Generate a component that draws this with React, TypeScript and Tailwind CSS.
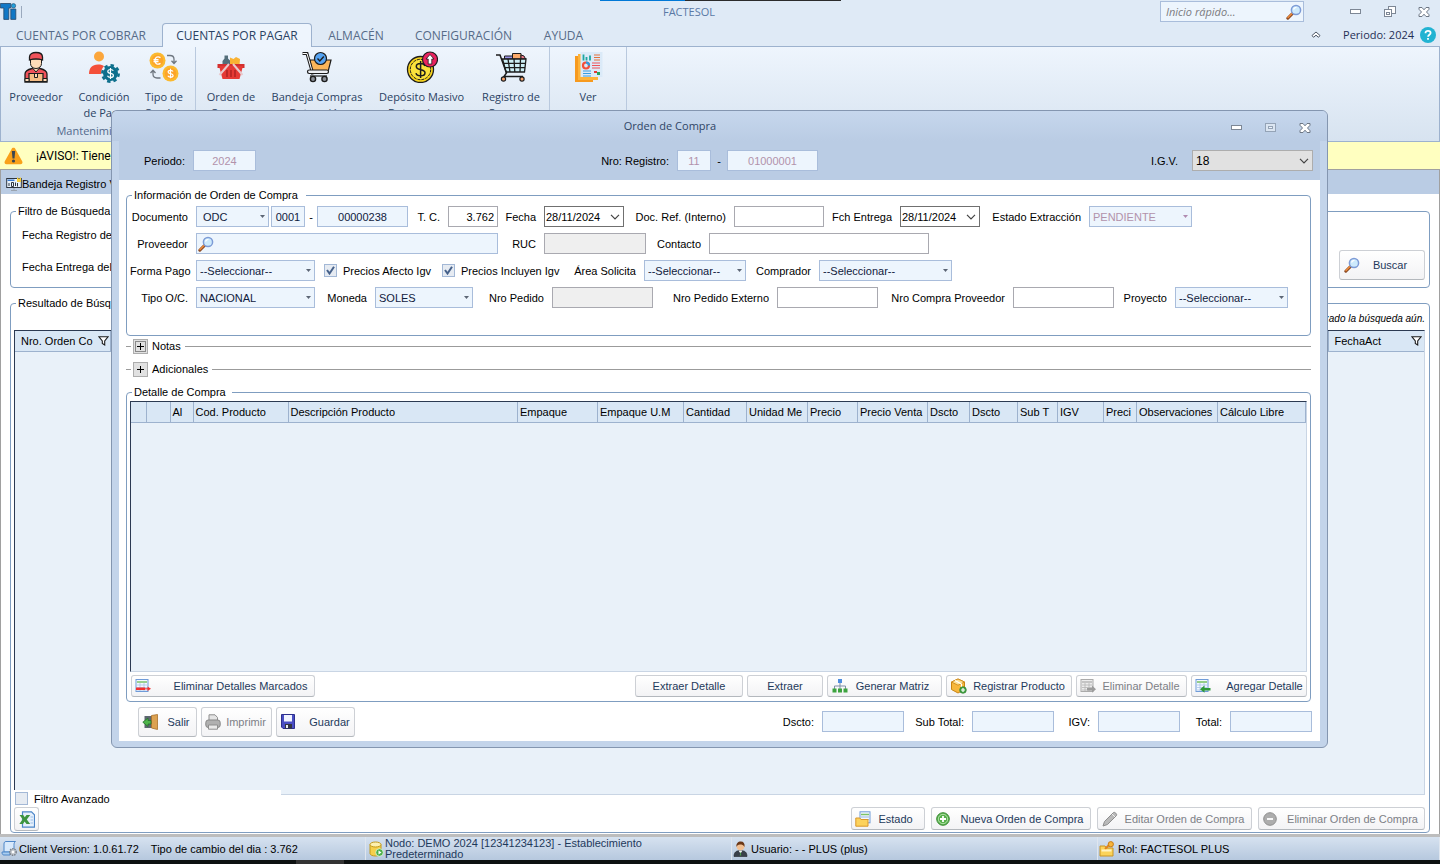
import React, { ReactNode } from "react";

/* ---------- drawings ---------- */

const Svg = ({ w, h, vb, children, className = "" }: { w: number; h: number; vb: string; children: ReactNode; className?: string }) => (
  <svg width={w} height={h} viewBox={vb} className={"shrink-0 " + className} fill="none" aria-hidden="true">
    {children}
  </svg>
);

const Logo = () => (
  <Svg w={17} h={17} vb="0 0 17 17">
    <path d="M.4.500h10.400v4.500H8.800v11.400H3.800V5H.4z" fill="#1178c6" stroke="#27476a" strokeWidth=".8" />
    <path d="M10.800 6h5v10.400h-5z" fill="#1178c6" stroke="#27476a" strokeWidth=".8" />
    <circle cx="13.500" cy="2.800" r="2.200" fill="#22a0dc" stroke="#27476a" strokeWidth=".6" />
  </Svg>
);

const Magnifier = () => (
  <Svg w={16} h={16} vb="0 0 16 16">
    <path d="M6.500 9.500 1.800 14.200" stroke="#8a4a24" strokeWidth="3" strokeLinecap="round" />
    <path d="M6 9.500 2 13.500" stroke="#f08c3c" strokeWidth="1.500" strokeLinecap="round" />
    <circle cx="10" cy="6" r="4.600" fill="#cdeafc" stroke="#7d9bd6" strokeWidth="1.500" />
    <path d="M7.500 5.500a3 3 0 0 1 3-2.200" stroke="#fff" strokeWidth="1.300" />
  </Svg>
);

const IcoProveedor = () => (
  <Svg w={32} h={32} vb="0 0 32 32">
    <path d="M5 31V23c0-3 3-4.500 7-5.500h8c4 1 7 2.500 7 5.500v8z" fill="#f0525a" stroke="#1c1c1c" strokeWidth="1.300" />
    <path d="m12.500 17 3.500 4 3.500-4v-3h-7z" fill="#ffdcb8" stroke="#1c1c1c" />
    <path d="M10.500 8h11v4.500c0 3-2.500 5-5.500 5s-5.500-2-5.500-5z" fill="#ffdcb8" stroke="#1c1c1c" />
    <path d="M9.500 9V6c0-3 3-4.500 6.500-4.500S22.500 3 22.500 6v3c-4-1.500-9-1.500-13 0z" fill="#f0525a" stroke="#1c1c1c" strokeWidth="1.300" />
    <path d="M9 30.500v-8h14v8z" fill="#f5bd85" stroke="#1c1c1c" strokeWidth="1.200" />
    <path d="M14.500 23v3.500h3V23M5 27.500h4v3H5zM23 27.500h4v3h-4z" fill="#ffdcb8" stroke="#1c1c1c" />
  </Svg>
);

const IcoCondicion = () => (
  <Svg w={32} h={32} vb="0 0 32 32">
    <circle cx="11" cy="5.500" r="5" fill="#fba63c" />
    <path d="M1 23c0-6 3-9.500 9-9.500 3 0 5 .6 6 1.800-2 2-3 4.500-3 7.700z" fill="#f4503a" />
    <circle cx="22.500" cy="22.500" r="8.200" stroke="#0d6f8c" strokeWidth="2.500" strokeDasharray="3.400 3" />
    <circle cx="22.500" cy="22.500" r="7.500" fill="#0d6f8c" />
    <path d="M25.300 19.800c-.5-1-1.500-1.300-2.800-1.300-1.700 0-2.700.8-2.700 1.900 0 2.900 5.600 1.200 5.600 4 0 1.200-1.200 2-2.900 2-1.500 0-2.600-.5-3-1.600M22.500 17v11" stroke="#fff" strokeWidth="1.200" />
  </Svg>
);

const IcoCambio = () => (
  <Svg w={32} h={32} vb="0 0 32 32">
    <circle cx="9.500" cy="9.500" r="8" fill="#fbb92e" />
    <circle cx="9.500" cy="9.500" r="5.700" fill="#fda429" />
    <path d="M12.500 6.600c-3.500-2-5.500.2-5.500 2.900s2 4.900 5.500 2.900M5.500 8.700h5M5.500 10.500h5" stroke="#fff" strokeWidth="1.300" />
    <circle cx="22.500" cy="22.500" r="8" fill="#fbb92e" />
    <circle cx="22.500" cy="22.500" r="5.700" fill="#fda429" />
    <path d="M25 20.500c-.4-.9-1.300-1.200-2.500-1.200-1.500 0-2.400.6-2.400 1.600 0 2.500 5 1 5 3.500 0 1-1 1.700-2.600 1.700-1.300 0-2.300-.5-2.600-1.400M22.500 17.800v9.500" stroke="#fff" strokeWidth="1.200" />
    <path d="M19 4.500h3c2.500 0 4 1.200 4 3.700v4M23.500 9.800l2.500 2.700 2.500-2.700M12.500 27H9c-2.500 0-4-1.200-4-3.700v-4M2.500 22 5 19.200 7.500 22" stroke="#6f7780" strokeWidth="1.300" />
  </Svg>
);

const IcoCanasta = () => (
  <Svg w={32} h={32} vb="0 0 32 32">
    <path d="M9.500 4.500h3.500v3l2.500 2.500v5h-8v-5l2-2.500z" fill="#546e7a" />
    <path d="m15 6.500 3.500 1.500L21 6l4 2-.5 7H15z" fill="#f9b233" />
    <path d="M2.500 13h27v4h-27z" fill="#d32f2f" />
    <path d="M4 15h24l-3.500 13h-17z" fill="#e53935" />
    <path d="M12 19v7M16 19v7M20 19v7" stroke="#a81f1f" strokeWidth="1.300" />
    <path d="M14 13 4.500 24M18 13l9.500 11" stroke="#e8c8cc" strokeWidth="2" />
  </Svg>
);

const IcoBandeja = () => (
  <Svg w={32} h={32} vb="0 0 32 32">
    <path d="M9 9h21l-3 12H11z" fill="#fbb65a" stroke="#1c1c1c" strokeWidth="1.200" />
    <path d="M1.500 2.500H6l6 21" stroke="#1c1c1c" strokeWidth="3" />
    <path d="M1.500 2.500H6l6 21" stroke="#fff" strokeWidth="1" />
    <rect x="6.500" y="19" width="21" height="3.500" rx="1.700" fill="#eef0f5" stroke="#1c1c1c" strokeWidth="1.200" />
    <path d="M9 25h17" stroke="#1c1c1c" strokeWidth="1.200" />
    <circle cx="12" cy="28" r="2.600" fill="#8b8f98" stroke="#1c1c1c" strokeWidth="1.400" />
    <circle cx="23.500" cy="28" r="2.600" fill="#8b8f98" stroke="#1c1c1c" strokeWidth="1.400" />
    <circle cx="19.500" cy="7.500" r="6" fill="#55a3f2" stroke="#1c1c1c" strokeWidth="1.200" />
    <path d="m16.500 7.500 2.300 2.400 4-4.400" stroke="#1c1c1c" strokeWidth="1.400" />
  </Svg>
);

const IcoDeposito = () => (
  <Svg w={32} h={32} vb="0 0 32 32">
    <circle cx="14.500" cy="18.500" r="13" fill="#f8d41c" stroke="#1c1c1c" strokeWidth="1.300" />
    <circle cx="14.500" cy="18.500" r="10.200" fill="#fbe23c" stroke="#1c1c1c" strokeWidth="1" strokeDasharray="3 1" />
    <path d="M19 15c-.6-1.600-2.200-2.400-4.400-2.400-2.600 0-4.300 1.100-4.300 3 0 4.400 8.700 1.900 8.700 6.100 0 1.900-1.800 3.100-4.400 3.100-2.400 0-4.200-.9-4.600-2.700M14.600 10v17" stroke="#1c1c1c" strokeWidth="1.500" />
    <circle cx="24" cy="8.500" r="7.500" fill="#e9235f" stroke="#1c1c1c" strokeWidth="1.200" />
    <path d="m24 3.500 4 4.500h-2.200v5h-3.600V8H20z" fill="#fff" stroke="#1c1c1c" strokeWidth=".8" />
  </Svg>
);

const IcoRegistro = () => (
  <Svg w={32} h={32} vb="0 0 32 32">
    <path d="M9.500 8V5h8v3z" fill="#9a93e6" stroke="#1c1c1c" />
    <path d="M17.500 8V2.500H26V8z" fill="#fbaa6b" stroke="#1c1c1c" />
    <path d="M26 8V4l3 1 1.500 3z" fill="#f27a8c" stroke="#1c1c1c" />
    <path d="M7.500 8H31l-1.500 13H11z" fill="#cdeff5" stroke="#1c1c1c" strokeWidth="1.300" />
    <path d="M8.500 12.300H30.500M9.800 16.600H30M13 8l2 13M19 8l.8 13M25.500 8 25 21" stroke="#1c1c1c" strokeWidth="1.300" />
    <path d="M1 4h4l6.500 18-2.500 3.500h19" stroke="#1c1c1c" strokeWidth="1.500" />
    <circle cx="8.500" cy="28" r="2.100" fill="#fba36b" stroke="#1c1c1c" strokeWidth="1.200" />
    <circle cx="27" cy="28" r="2.100" fill="#fba36b" stroke="#1c1c1c" strokeWidth="1.200" />
  </Svg>
);

const IcoVer = () => (
  <Svg w={32} h={32} vb="0 0 32 32">
    <path d="M3 5h18v26H3z" fill="#f79a1e" />
    <path d="M6 3h20v26H6z" fill="#fdb33a" />
    <path d="M8.500 1h22v25h-22z" fill="#dbeaf8" />
    <path d="M11.500 3.500v6M14.500 6v3.500M18 4.500v5" stroke="#20a7a0" strokeWidth="1.800" />
    <path d="M22 4h6M22 6.500h6M22 9h6" stroke="#e5713a" strokeWidth="1.200" />
    <circle cx="14" cy="14.500" r="3" stroke="#f4503a" strokeWidth="2.200" />
    <path d="M14 11.500a3 3 0 0 1 3 3" stroke="#2d9ce0" strokeWidth="2.200" />
    <path d="M20 12h8M20 14.500h8M20 17h8" stroke="#f0525a" strokeWidth="1.200" />
    <path d="M11 20h8M11 22.500h8M11 25h8" stroke="#3a9de0" strokeWidth="1.200" />
    <path d="M22 20h3v2h-3z" fill="#e53935" />
    <path d="M25 21h3v3h-3z" fill="#28a35a" />
  </Svg>
);

const WinMin = () => (
  <Svg w={12} h={12} vb="0 0 12 12">
    <rect x=".5" y="3.500" width="10" height="4" fill="#fff" stroke="#7d8795" />
  </Svg>
);
const WinRestore = () => (
  <Svg w={12} h={12} vb="0 0 12 12">
    <rect x="4.500" y=".5" width="7" height="7" fill="#fff" stroke="#7d8795" />
    <rect x=".5" y="3.500" width="7" height="7" fill="#fff" stroke="#7d8795" />
    <rect x="2.500" y="6.500" width="3" height="2" stroke="#7d8795" />
  </Svg>
);
const WinMax = () => (
  <Svg w={12} h={12} vb="0 0 12 12">
    <rect x=".5" y="1.500" width="10" height="8" fill="#dbe5f1" stroke="#94a3b6" />
    <rect x="3.500" y="4.500" width="4" height="2" fill="#eef4fb" stroke="#94a3b6" />
  </Svg>
);
const WinClose = () => (
  <Svg w={12} h={12} vb="0 0 12 12">
    <path d="M1 1.500h3l2 2.300 2-2.300h3v1.800L8.500 6 11 8.700v1.800H8L6 8.200 4 10.500H1V8.700L3.500 6 1 3.300z" fill="#fff" stroke="#6d7785" />
  </Svg>
);
const Chevron = () => (
  <Svg w={10} h={6} vb="0 0 10 6">
    <path d="m1 .8 4 4 4-4" stroke="#444" strokeWidth="1.200" />
  </Svg>
);
const Triangle = ({ dim = false }: { dim?: boolean }) => (
  <Svg w={5} h={3} vb="0 0 5 3">
    <path d="M0 0h5L2.500 3z" fill={dim ? "#b08bb0" : "#5c6675"} />
  </Svg>
);
const Funnel = () => (
  <Svg w={11} h={10} vb="0 0 11 10">
    <path d="M.8.700h9.400L6.700 5v4L4.300 7.500V5z" fill="#fff" stroke="#1c1c1c" strokeWidth="1.100" />
  </Svg>
);

const GridIcon = ({ arrow }: { arrow: "red" | "gray" | "green" }) => (
  <Svg w={16} h={16} vb="0 0 16 16">
    <rect x="1" y="1.500" width="12" height="12" fill={arrow === "gray" ? "#ececec" : "#f4f9ff"} stroke={arrow === "gray" ? "#aaa" : "#6f9bd8"} />
    <path d="M2 4h10" stroke={arrow === "gray" ? "#bbb" : "#7cc36a"} strokeWidth="1.600" />
    <path d="M2 7h10M2 9.500h10M2 12h10M5 5v8M9 5v8" stroke={arrow === "gray" ? "#b5b5b5" : "#a9c3e8"} strokeWidth=".8" />
    {arrow === "red" && <path d="M1 9.500h9V12H1z" fill="#f23030" />}
    {arrow === "red" && <path d="M10 10.800h3" stroke="#f23030" />}
    {arrow === "red" && <path d="m12.500 8.500 3.500 2.300-3.500 2.300z" fill="#f23030" />}
    {arrow === "gray" && <path d="M7 10h5V7.500l4 3.700-4 3.600V12.500H7z" fill="#9c9c9c" />}
    {arrow === "green" && <path d="M15.500 10h-6V7.500L5 11.200l4.500 3.600V12.500h6z" fill="#2f9a3a" />}
  </Svg>
);
const TreeIcon = () => (
  <Svg w={16} h={16} vb="0 0 16 16">
    <path d="M8 4v4M2.500 11V8h11v3M8 8v3" stroke="#7f8fa8" />
    <rect x="6" y="1" width="4" height="4" fill="#4d8de0" />
    <path d="M.5 10.500h4v4h-4zM6 10.500h4v4H6zM11.500 10.500h4v4h-4z" fill="#3da33f" />
  </Svg>
);
const BoxIcon = () => (
  <Svg w={17} h={16} vb="0 0 17 16">
    <path d="m8 1 6.500 3v7.500L8 15l-6.500-3.500V4z" fill="#f7b73c" stroke="#c98412" />
    <path d="m1.500 4 6.500 3.200L14.500 4 8 1z" fill="#fddf92" stroke="#c98412" strokeWidth=".8" />
    <path d="M5 2.500 11.500 6v3" stroke="#fff" strokeWidth="1.200" />
    <circle cx="13" cy="12" r="3.300" fill="#46a546" stroke="#2d7c2d" strokeWidth=".7" />
    <path d="M13 10v4M11 12h4" stroke="#fff" strokeWidth="1.200" />
  </Svg>
);
const DoorIcon = () => (
  <Svg w={17} h={16} vb="0 0 17 16">
    <path d="M2.500 2h8v12h-8z" fill="#5d6670" />
    <path d="M9.500 1.500 15.500.500v15l-6-1.500z" fill="#dca251" stroke="#a8702a" strokeWidth=".8" />
    <path d="M9 6.500H6V4L.8 8.200 6 12.500V10h3z" fill="#4fb54b" stroke="#23742a" strokeWidth=".8" />
  </Svg>
);
const PrinterIcon = () => (
  <Svg w={16} h={16} vb="0 0 16 16">
    <path d="M4 7V.800h6L12.500 3.500V7z" fill="#e4e4e4" stroke="#8f8f8f" />
    <rect x=".8" y="6" width="14.400" height="7.500" rx="2.500" fill="#b0b0b0" stroke="#878787" />
    <path d="M3.500 11h9v4.200h-9z" fill="#e9e9e9" stroke="#8f8f8f" />
  </Svg>
);
const DiskIcon = () => (
  <Svg w={14} h={15} vb="0 0 14 15">
    <path d="M.5.500h13v14H2l-1.500-1.500z" fill="#4a4ec4" stroke="#2d2f8c" />
    <path d="M3 1h8v6.500H3z" fill="#f1f4ff" />
    <path d="M4 10h7v4.500H4z" fill="#32353f" />
    <path d="M5 11h2v3H5z" fill="#e9ecf8" />
  </Svg>
);
const FolderGrid = () => (
  <Svg w={16} h={16} vb="0 0 16 16">
    <rect x="5" y=".8" width="10" height="11" fill="#f4f9ff" stroke="#6f9bd8" />
    <path d="M6 3.500h8" stroke="#7cc36a" strokeWidth="1.500" />
    <path d="M6 6h8M6 8.500h8" stroke="#9ab6e0" />
    <path d="M.8 7h4l1.200 1.500h7v6.700H.8z" fill="#fcd25c" stroke="#d9982a" />
  </Svg>
);
const PlusIcon = () => (
  <Svg w={14} h={14} vb="0 0 14 14">
    <circle cx="7" cy="7" r="6.300" fill="#57b04c" stroke="#3a8a33" />
    <circle cx="7" cy="7" r="4.700" stroke="#c9ecc0" strokeWidth=".8" />
    <path d="M7 4v6M4 7h6" stroke="#fff" strokeWidth="1.800" />
  </Svg>
);
const MinusIcon = () => (
  <Svg w={14} h={14} vb="0 0 14 14">
    <circle cx="7" cy="7" r="6.300" fill="#adadad" stroke="#8f8f8f" />
    <path d="M4 7h6" stroke="#fff" strokeWidth="1.800" />
  </Svg>
);
const PencilIcon = () => (
  <Svg w={16} h={16} vb="0 0 16 16">
    <path d="M1 15 2.500 10.500 11.500 1.500c1-1 4 1.800 3 3L5.500 13.500z" fill="#b9b9b9" stroke="#8d8d8d" />
    <path d="m10 3 3 3" stroke="#eee" />
  </Svg>
);
const ExcelIcon = () => (
  <Svg w={16} h={17} vb="0 0 16 17">
    <path d="M3.500.800h9l3 3v12.400h-12z" fill="#e6f0fc" stroke="#4d86c8" strokeWidth="1.200" />
    <path d="M11.500 6h2.500M11.500 9h2.500M11.500 12h2.500" stroke="#9bbfe8" />
    <path d="M.5 4h3.700l1.600 2.300L7.500 4h3.700L7.800 8.500l3.400 4.500H7.500L5.600 10.500 4 13H.3l3.400-4.700z" fill="#3d9440" />
  </Svg>
);
const WarnIcon = () => (
  <Svg w={19} h={18} vb="0 0 19 18">
    <path d="M9.500.800c1 0 1.500.500 2 1.400l6.700 12c.8 1.500 0 3-1.700 3h-14c-1.700 0-2.500-1.500-1.700-3l6.700-12c.5-.9 1-1.400 2-1.400z" fill="#f9a11b" />
    <path d="M7.800 4h3.400l-.7 7.500h-2z" fill="#3c4650" />
    <circle cx="9.500" cy="14" r="1.600" fill="#3c4650" />
  </Svg>
);
const MonitorIcon = () => (
  <Svg w={16} h={16} vb="0 0 16 16">
    <rect x=".7" y="2.500" width="14.600" height="9" fill="#e9f3fc" stroke="#2d3540" />
    <path d="M1.500 3.500h7v1.500h-7z" fill="#3a7bd0" />
    <path d="M3 7v3M5.500 6.500v4h2v-4zM9.500 6.500V10M11.500 7v3.500" stroke="#2d3540" />
    <path d="m11 1 2 2 2-2v5h-4z" fill="#f7cf3c" />
    <path d="M8 12v2M5 14.500h6" stroke="#9aa4b0" />
  </Svg>
);
const VersionIcon = () => (
  <Svg w={17} h={17} vb="0 0 17 17">
    <path d="M5 1.500h9.500c-1.500 1-1.500 2-1.500 4V12H3V4c0-1.500.6-2.500 2-2.500z" fill="#d8e9fb" stroke="#4d86c8" />
    <path d="M1 12h8v3H3c-1.500 0-2-1-2-3z" fill="#a9cdf0" stroke="#4d86c8" />
    <circle cx="12" cy="12" r="3.200" fill="#c3c8cf" stroke="#7c838c" strokeWidth="1.500" strokeDasharray="1.500 .8" />
    <circle cx="12" cy="12" r="1.200" fill="#fff" />
  </Svg>
);
const DbIcon = () => (
  <Svg w={15} h={16} vb="0 0 15 16">
    <path d="M1 3.500v9C1 14 3.500 15 6.500 15S12 14 12 12.500v-9z" fill="#f5cf4a" stroke="#c39a1d" />
    <ellipse cx="6.500" cy="3.500" rx="5.500" ry="2.500" fill="#fdf0b0" stroke="#c39a1d" />
    <circle cx="10.500" cy="11.500" r="3.800" fill="#4db04a" stroke="#e6f7e0" strokeWidth=".8" />
    <path d="m9.500 9.500 3 2-3 2z" fill="#fff" />
  </Svg>
);
const UserIcon = () => (
  <Svg w={15} h={16} vb="0 0 15 16">
    <path d="M1 15.500c0-4 2-6 6.500-6s6.500 2 6.500 6z" fill="#39404a" stroke="#20252c" strokeWidth=".6" />
    <path d="m5.500 9.500 2 3 2-3z" fill="#fff" />
    <path d="m7.500 10.500 .8 4h-1.600z" fill="#4aa04a" />
    <circle cx="7.500" cy="5.500" r="3.800" fill="#f2c093" />
    <path d="M3.500 6C3 2.500 5 .6 7.800.6S12 2.500 11.500 6C10.500 4 9 3.500 7 3.500 5 3.500 4 4.500 3.500 6z" fill="#6b3716" />
  </Svg>
);
const RolIcon = () => (
  <Svg w={16} h={16} vb="0 0 16 16">
    <path d="M1 5h5l1.500 2H14v8H1z" fill="#fbd35a" stroke="#c99425" />
    <path d="m6 8 4.500-4.500" stroke="#e0851e" strokeWidth="2" />
    <circle cx="11.800" cy="3.200" r="2.600" fill="#f8b53a" stroke="#c97c18" />
    <path d="M2.500 8.500h10v2h-10z" fill="#fff3c4" />
  </Svg>
);

/* ---------- controls ---------- */

const btn =
  "flex shrink-0 items-center rounded-[3px] border border-[#cdd0d5] border-b-[#b4b8bd] bg-gradient-to-b from-white to-[#f3f3f5] whitespace-nowrap";

function Button({ icon, children, className, disabled }: { icon?: ReactNode; children: ReactNode; className: string; disabled?: boolean }) {
  return (
    <button type="button" disabled={disabled} className={`${btn} ${className} ${disabled ? "text-[#7d7f86]" : "text-[#1e395b]"}`}>
      {icon}
      <span className="flex-1 text-center">{children}</span>
    </button>
  );
}

function Label({ id, w, children }: { id: string; w: string; children: ReactNode }) {
  return (
    <label htmlFor={id} className={`${w} shrink-0 whitespace-nowrap pr-2 text-right`}>
      {children}
    </label>
  );
}

const tones = {
  blue: "bg-[#edf5fd] border-[#a9bddb] text-[#10203c]",
  dim: "bg-[#edf5fd] border-[#a9bddb] text-[#b292ab]",
  white: "bg-white border-[#a9a9b0] text-black",
  gray: "bg-[#efefef] border-[#a9a9b0] text-black",
};

function Text({ id, w, value = "", tone = "white", align = "text-center", label }: { id: string; w: string; value?: string; tone?: keyof typeof tones; align?: string; label?: string }) {
  return (
    <input
      id={id}
      aria-label={label}
      defaultValue={value}
      disabled={tone === "dim" || tone === "gray"}
      className={`${w} ${tones[tone]} ${align} h-[21px] shrink-0 border px-[3px] outline-none`}
    />
  );
}

function Select({ id, w, value, dim, pad = "pl-[3px]" }: { id: string; w: string; value: string; dim?: boolean; pad?: string }) {
  return (
    <div className={`${w} relative h-[21px] shrink-0`}>
      <select id={id} disabled={dim} className={`${dim ? tones.dim : tones.blue} ${pad} h-full w-full appearance-none border opacity-100 outline-none`}>
        <option>{value}</option>
      </select>
      <span className="pointer-events-none absolute right-1 top-[9px]">
        <Triangle dim={dim} />
      </span>
    </div>
  );
}

function DateBox({ id }: { id: string }) {
  return (
    <div className="flex h-[21px] w-[80px] shrink-0 items-center border border-[#707070] bg-white pr-[3px]">
      <input id={id} defaultValue="28/11/2024" className="min-w-0 flex-1 pl-px outline-none" />
      <button type="button" aria-label="Abrir calendario">
        <Chevron />
      </button>
    </div>
  );
}

function Check({ w, children }: { w: string; children: ReactNode }) {
  return (
    <label className={`${w} flex shrink-0 items-center gap-1.5 whitespace-nowrap`}>
      <span className="relative flex h-[13px] w-[13px] items-center justify-center">
        <input type="checkbox" defaultChecked className="h-[13px] w-[13px] appearance-none border border-[#a3b8d6] bg-[#e6ebf2]" />
        <svg width="9" height="9" viewBox="0 0 9 9" fill="none" className="pointer-events-none absolute">
          <path d="m1 4 2.500 3.500L8 .8" stroke="#46618a" strokeWidth="2" />
        </svg>
      </span>
      {children}
    </label>
  );
}

function RibbonItem({ w, icon, l1, l2 }: { w: string; icon: ReactNode; l1: string; l2?: string }) {
  return (
    <button type="button" className={`${w} flex shrink-0 flex-col items-center pt-1 text-[#2a4263]`}>
      {icon}
      <span className="mt-1.5 whitespace-nowrap leading-4">{l1}</span>
      <span className="whitespace-nowrap leading-4">{l2}</span>
    </button>
  );
}

const ribbonFont = "font-['Open_Sans','Noto_Sans',sans-serif]";
const frame = "min-w-0 rounded-[4px] border border-[#7f9dc0]";

const columns: [string, string][] = [
  ["", "w-[15px]"],
  ["", "w-[24px]"],
  ["Al", "w-[23px]"],
  ["Cod. Producto", "w-[95px]"],
  ["Descripción Producto", ""],
  ["Empaque", "w-[80px]"],
  ["Empaque U.M", "w-[86px]"],
  ["Cantidad", "w-[63px]"],
  ["Unidad Me", "w-[61px]"],
  ["Precio", "w-[50px]"],
  ["Precio Venta", "w-[70px]"],
  ["Dscto", "w-[42px]"],
  ["Dscto", "w-[48px]"],
  ["Sub T", "w-[40px]"],
  ["IGV", "w-[46px]"],
  ["Preci", "w-[33px]"],
  ["Observaciones", "w-[81px]"],
  ["Cálculo Libre", "w-[88px]"],
];

/* ---------- main window ---------- */

function Header() {
  const tab = "flex h-6 items-center justify-center pt-0.5 text-[#566b88]";
  return (
    <header className={`${ribbonFont} relative bg-[#dfeaf6] text-[11px]`}>
      <div className="absolute left-[600px] top-0 flex h-px w-[241px]">
        <span className="flex-1 bg-[#0078d7]" />
        <span className="w-[156px] bg-[#2b2b2b]" />
      </div>
      <div className="flex h-[23px] items-center">
        <div className="flex w-[218px] items-center gap-1">
          <Logo />
          <span className="h-3 w-px bg-[#9aa9bd]" />
        </div>
        <span className="flex-1 text-center text-[#5a79a5]">FACTESOL</span>
        <div className="flex items-center justify-end gap-[22px] pr-[10px]">
          <div className="mr-[24px] flex h-[21px] w-36 items-center border border-[#a9bddb] bg-[#edf5fd] pl-[5px] pr-px">
            <input aria-label="Inicio rápido" placeholder="Inicio rápido..." className="min-w-0 flex-1 italic outline-none placeholder:text-[#7b7b80]" />
            <Magnifier />
          </div>
          <button type="button" aria-label="Minimizar"><WinMin /></button>
          <button type="button" aria-label="Restaurar"><WinRestore /></button>
          <button type="button" aria-label="Cerrar"><WinClose /></button>
        </div>
      </div>
      <nav className="flex h-6 border-b border-[#9db2ce] text-[12px]">
        <a href="#cobrar" className={`${tab} w-[162px]`}>CUENTAS POR COBRAR</a>
        <a href="#pagar" className="flex h-6 w-[150px] items-center justify-center rounded-t-[4px] border border-b-0 border-[#9db2ce] bg-[#eef5fd] text-[#2a4263]">
          CUENTAS POR PAGAR
        </a>
        <a href="#almacen" className={`${tab} w-[88px]`}>ALMACÉN</a>
        <a href="#configuracion" className={`${tab} w-[127px]`}>CONFIGURACIÓN</a>
        <a href="#ayuda" className={`${tab} w-[73px]`}>AYUDA</a>
        <div className="ml-auto flex items-center pr-1 text-[11px] text-[#1f2f55]">
          <button type="button" aria-label="Contraer cinta" className="mr-[22px]">
            <Svg w={10} h={8} vb="0 0 10 8">
              <path d="M1 4.500 5 1l4 3.500-1.500 1.800L5 4.200 2.500 6.300z" fill="#fff" stroke="#4d5766" />
            </Svg>
          </button>
          <span className="mr-1.5">Periodo: 2024</span>
          <button type="button" aria-label="Ayuda">
            <Svg w={16} h={16} vb="0 0 16 16">
              <circle cx="8" cy="8" r="8" fill="#22b3d2" />
              <path d="M5.500 6.200C5.500 4.700 6.500 3.800 8 3.800s2.600.9 2.600 2.200c0 1.800-2.500 1.700-2.500 3.700M8 11v1.800" stroke="#fff" strokeWidth="1.800" />
            </Svg>
          </button>
        </div>
      </nav>
      <div className="flex h-[95px] border-x border-b border-[#9db2ce] bg-gradient-to-b from-[#eef5fd] to-[#d7e3f0] pl-px">
        <section className="flex w-[194px] shrink-0 flex-col border-r border-[#b9c9de]">
          <div className="flex flex-1">
            <RibbonItem w="w-[68px]" icon={<IcoProveedor />} l1="Proveedor" />
            <RibbonItem w="w-[68px]" icon={<IcoCondicion />} l1="Condición" l2="de Pago" />
            <RibbonItem w="w-[52px]" icon={<IcoCambio />} l1="Tipo de" l2="Cambio" />
          </div>
          <h2 className="h-[18px] text-center leading-4 text-[#52698c]">Mantenimientos</h2>
        </section>
        <section className="flex w-[354px] shrink-0 border-r border-[#b9c9de]">
          <RibbonItem w="w-[70px]" icon={<IcoCanasta />} l1="Orden de" l2="Compra" />
          <RibbonItem w="w-[102px]" icon={<IcoBandeja />} l1="Bandeja Compras" l2="Detracción" />
          <RibbonItem w="w-[107px]" icon={<IcoDeposito />} l1="Depósito Masivo" l2="Detracciones" />
          <RibbonItem w="w-[72px]" icon={<IcoRegistro />} l1="Registro de" l2="Compras" />
        </section>
        <section className="flex w-[77px] shrink-0 border-r border-[#b9c9de]">
          <RibbonItem w="w-[76px]" icon={<IcoVer />} l1="Ver" />
        </section>
      </div>
    </header>
  );
}

function Workspace() {
  return (
    <main className="flex min-h-0 flex-1 flex-col">
      <div className="flex h-[28px] items-center border-b border-[#a0a0a0] bg-[#ffffc0] pl-1">
        <WarnIcon />
        <span className="ml-[13px] font-['Roboto',sans-serif] text-[12px]">¡AVISO!: Tiene</span>
      </div>
      <div className="flex min-h-0 flex-1 flex-col border-x border-[#a0a0a0] bg-white">
        <div className="flex h-6 items-center bg-[#bacce4] pl-[5px] pt-1">
          <MonitorIcon />
          <span>Bandeja Registro V</span>
        </div>
        <div className="flex min-h-0 flex-1 flex-col px-[9px] pb-px pt-[10px]">
          <fieldset className={`${frame} flex h-[84px] shrink-0 justify-between pl-[11px] pr-1`}>
            <legend className="-ml-1.5 px-0.5 leading-[14px]">Filtro de Búsqueda</legend>
            <div className="flex flex-col gap-[18px] pt-2.5 leading-[14px]">
              <span>Fecha Registro de</span>
              <span>Fecha Entrega del</span>
            </div>
            <Button className="mt-8 h-[30px] w-[86px] pl-1 pr-1" icon={<Magnifier />}>Buscar</Button>
          </fieldset>
          <fieldset className={`${frame} mt-2 flex min-h-0 flex-1 flex-col pl-[3px] pr-1`}>
            <legend className="ml-0.5 px-0.5 leading-[14px]">Resultado de Búsqueda</legend>
            <p className="mt-0.5 h-[18px] text-right text-[10px] italic leading-[14px]">realizado la búsqueda aún.</p>
            <div className="min-h-0 flex-1 border border-b-[#c9d5e4] border-l-[#2c3a52] border-r-[#c9d5e4] border-t-[#2c3a52] bg-[#e9f1f9]">
              <table className="w-full table-fixed">
                <thead>
                  <tr className="h-5 border-b border-[#9db2ce] bg-[#d9e7f5] text-left">
                    <th className="w-[95px] border-r border-[#9db2ce] pl-1.5 font-normal">
                      <div className="flex items-center justify-between pr-px">Nro. Orden Co <Funnel /></div>
                    </th>
                    <th />
                    <th className="w-[96px] border-l border-[#9db2ce] pl-1.5 font-normal">
                      <div className="flex items-center justify-between pr-0.5">FechaAct <Funnel /></div>
                    </th>
                  </tr>
                </thead>
              </table>
            </div>
            <div className="flex h-[37px] shrink-0 items-start">
              <div className="z-0 -mt-[5px] w-[267px] bg-white">
                <label className="flex h-[17px] items-center gap-1.5 pl-px">
                  <input type="checkbox" className="h-[13px] w-[13px] appearance-none border border-[#a3b8d6] bg-[#e6ebf2]" />
                  Filtro Avanzado
                </label>
                <button type="button" aria-label="Exportar a Excel" className={`${btn} h-6 w-[25px] justify-center`}>
                  <ExcelIcon />
                </button>
              </div>
              <div className="ml-auto mt-3 flex gap-1.5">
                <Button className="h-[23px] w-[74px] pl-[3px] pr-1" icon={<FolderGrid />}>Estado</Button>
                <Button className="h-[23px] w-[160px] pl-1" icon={<PlusIcon />}>
                  <span className="pl-1">Nueva Orden de Compra</span>
                </Button>
                <Button className="h-[23px] w-[155px] pl-1" icon={<PencilIcon />} disabled>Editar Orden de Compra</Button>
                <Button className="h-[23px] w-[167px] pl-1" icon={<MinusIcon />} disabled>
                  <span className="pl-1">Eliminar Orden de Compra</span>
                </Button>
              </div>
            </div>
          </fieldset>
        </div>
      </div>
    </main>
  );
}

function StatusBar() {
  const cell = "flex min-w-0 items-center border-r border-[#dfe6ef] bg-gradient-to-b from-[#d6e2f0] to-[#b6c8de]";
  return (
    <footer className="shrink-0">
      <div className="grid h-[26px] grid-cols-[366fr_366fr_366fr_342fr] border-t-[3px] border-[#bdbdbd]">
        <div className={`${cell} gap-px pl-px`}>
          <VersionIcon />
          <span>Client Version: 1.0.61.72</span>
          <span className="ml-[11px]">Tipo de cambio del dia : 3.762</span>
        </div>
        <div className={`${cell} gap-px pl-[3px] text-[#1e395b]`}>
          <DbIcon />
          <span className="leading-[11px]">
            Nodo: DEMO 2024 [12341234123] - Establecimiento
            <br />
            Predeterminado
          </span>
        </div>
        <div className={`${cell} gap-[3px] pl-px`}>
          <UserIcon />
          <span>Usuario: - - PLUS (plus)</span>
        </div>
        <div className={`${cell} gap-[3px] pl-px`}>
          <RolIcon />
          <span>Rol: FACTESOL PLUS</span>
        </div>
      </div>
      <div className="flex h-1 bg-[#0d1111] pl-[296px]">
        <span className="w-12 bg-[#333]" />
      </div>
    </footer>
  );
}

/* ---------- purchase order dialog ---------- */

function Collapsed({ title, focused }: { title: string; focused?: boolean }) {
  return (
    <div className="flex h-4 shrink-0 items-center">
      <span className="h-px w-[5px] bg-[#9b9b9b]" />
      <button type="button" aria-label={`Expandir ${title}`} className="ml-0.5 flex h-[15px] w-[15px] items-center justify-center border border-[#adadad] bg-[#e1e1e1]">
        <Svg w={13} h={13} vb="0 0 13 13">
          {focused && <rect x="1.500" y="1.500" width="10" height="10" stroke="#333" strokeDasharray="1 1" />}
          <path d="M6.500 3v7M3 6.500h7" stroke="#000" />
        </Svg>
      </button>
      <span className="ml-1 mr-1">{title}</span>
      <span className="h-px flex-1 bg-[#9b9b9b]" />
    </div>
  );
}

function OrderDialog() {
  const row = "flex h-[21px] items-center";
  return (
    <section
      role="dialog"
      aria-label="Orden de Compra"
      className="absolute bottom-[116px] left-[111px] right-[112px] top-[110px] flex flex-col overflow-hidden rounded-[6px] border border-[#8496b0] bg-[#c3d4ea]"
    >
      <div className="flex h-[30px] shrink-0 items-center bg-gradient-to-b from-[#c6d7ed] to-[#bacce4]">
        <h1 className={`${ribbonFont} flex-1 text-center text-[11px] text-[#2f4566]`}>Orden de Compra</h1>
        <div className="flex w-[99px] gap-[22px] pl-[3px] pt-1">
          <button type="button" aria-label="Minimizar orden"><WinMin /></button>
          <button type="button" aria-label="Maximizar orden"><WinMax /></button>
          <button type="button" aria-label="Cerrar orden"><WinClose /></button>
        </div>
      </div>
      <div className="mx-[7px] flex h-[39px] shrink-0 items-center bg-[#bacce4] pr-[7px]">
        <Label id="periodo" w="w-[74px]">Periodo:</Label>
        <Text id="periodo" w="w-[63px]" value="2024" tone="dim" />
        <Label id="nroreg" w="w-[421px]">Nro: Registro:</Label>
        <Text id="nroreg" w="w-[34px]" value="11" tone="dim" />
        <span className="w-4 text-center">-</span>
        <Text id="nroreg2" label="Número" w="w-[91px]" value="01000001" tone="dim" />
        <label htmlFor="igvp" className="ml-auto mr-[14px]">I.G.V.</label>
        <div className="relative h-[21px] w-[121px] shrink-0">
          <select id="igvp" className="h-full w-full appearance-none border border-[#adadad] bg-[#e1e1e1] pl-[3px] text-[12px]">
            <option>18</option>
          </select>
          <span className="pointer-events-none absolute right-1 top-2 flex">
            <Chevron />
          </span>
        </div>
      </div>

      <div className="mx-[7px] mb-1.5 flex min-h-0 flex-1 flex-col bg-white">
        <div className="flex min-h-0 flex-1 flex-col pl-[7px] pr-[9px] pt-2">
          <fieldset className={`${frame} h-[148px] shrink-0 px-[3px]`}>
            <legend className="ml-0.5 pl-0.5 pr-2 leading-[14px]">Información de Orden de Compra</legend>
            <div className="flex flex-col gap-1.5 pt-1">
              <div className={row}>
                <Label id="doc" w="w-[66px]">Documento</Label>
                <Select id="doc" w="w-[73px]" value="ODC" pad="pl-1.5" />
                <span className="w-0.5" />
                <Text id="serie" label="Serie" w="w-[34px]" value="0001" tone="blue" />
                <span className="w-3 text-center">-</span>
                <Text id="num" label="Número de documento" w="w-[91px]" value="00000238" tone="blue" />
                <Label id="tc" w="w-[40px]">T. C.</Label>
                <Text id="tc" w="w-[50px]" value="3.762" align="text-right" />
                <Label id="fecha" w="w-[46px]">Fecha</Label>
                <DateBox id="fecha" />
                <Label id="ref" w="w-[110px]">Doc. Ref. (Interno)</Label>
                <Text id="ref" w="w-[90px]" />
                <Label id="entrega" w="w-[76px]">Fch Entrega</Label>
                <DateBox id="entrega" />
                <Label id="estado" w="w-[109px]">Estado Extracción</Label>
                <Select id="estado" w="w-[103px]" value="PENDIENTE" dim />
              </div>
              <div className={row}>
                <Label id="prov" w="w-[66px]">Proveedor</Label>
                <div className="flex h-[21px] w-[302px] shrink-0 items-center border border-[#a9bddb] bg-[#edf5fd] pl-px">
                  <Magnifier />
                  <input id="prov" className="min-w-0 flex-1 outline-none" />
                </div>
                <Label id="ruc" w="w-[46px]">RUC</Label>
                <Text id="ruc" w="w-[102px]" tone="gray" />
                <Label id="contacto" w="w-[63px]">Contacto</Label>
                <Text id="contacto" w="w-[220px]" />
              </div>
              <div className={row}>
                <Label id="pago" w="w-[66px]">Forma Pago</Label>
                <Select id="pago" w="w-[119px]" value="--Seleccionar--" />
                <span className="w-[9px]" />
                <Check w="w-[118px]">Precios Afecto Igv</Check>
                <Check w="w-[120px]">Precios Incluyen Igv</Check>
                <Label id="area" w="w-[82px]">Área Solicita</Label>
                <Select id="area" w="w-[102px]" value="--Seleccionar--" />
                <Label id="comprador" w="w-[73px]">Comprador</Label>
                <Select id="comprador" w="w-[133px]" value="--Seleccionar--" />
              </div>
              <div className={row}>
                <Label id="tipo" w="w-[66px]">Tipo O/C.</Label>
                <Select id="tipo" w="w-[119px]" value="NACIONAL" />
                <Label id="moneda" w="w-[60px]">Moneda</Label>
                <Select id="moneda" w="w-[98px]" value="SOLES" />
                <Label id="ped" w="w-[79px]">Nro Pedido</Label>
                <Text id="ped" w="w-[101px]" tone="gray" />
                <Label id="pedext" w="w-[124px]">Nro Pedido Externo</Label>
                <Text id="pedext" w="w-[101px]" />
                <Label id="compra" w="w-[135px]">Nro Compra Proveedor</Label>
                <Text id="compra" w="w-[101px]" />
                <Label id="proy" w="w-[61px]">Proyecto</Label>
                <Select id="proy" w="w-[113px]" value="--Seleccionar--" />
              </div>
            </div>
          </fieldset>

          <div className="flex flex-col gap-[7px] pb-1 pt-0.5">
            <Collapsed title="Notas" focused />
            <Collapsed title="Adicionales" />
          </div>

          <fieldset className={`${frame} mt-1 flex min-h-0 flex-1 flex-col px-[3px] pb-1 pt-0.5`}>
            <legend className="ml-0.5 pl-0.5 pr-1.5 leading-[14px]">Detalle de Compra</legend>
            <div className="min-h-0 flex-1 border border-b-[#c9d5e4] border-l-[#2c3a52] border-r-[#c9d5e4] border-t-[#2c3a52] bg-[#e9f1f9]">
              <table className="w-full table-fixed">
                <thead>
                  <tr className="h-5 border-b border-[#9db2ce] bg-[#d9e7f5] text-left">
                    {columns.map(([name, w], i) => (
                      <th key={i} className={`${w} overflow-hidden whitespace-nowrap border-r border-[#9db2ce] p-0 pl-0.5 font-normal`}>
                        {name}
                      </th>
                    ))}
                  </tr>
                </thead>
              </table>
            </div>
            <div className="mt-[3px] flex shrink-0 gap-1 pl-px">
              <Button className="mr-auto h-[22px] w-[184px] pl-[3px]" icon={<GridIcon arrow="red" />}>
                <span className="pl-4">Eliminar Detalles Marcados</span>
              </Button>
              <Button className="h-[22px] w-[108px]">Extraer Detalle</Button>
              <Button className="h-[22px] w-[76px]">Extraer</Button>
              <Button className="h-[22px] w-[115px] pl-1 pr-1" icon={<TreeIcon />}>Generar Matriz</Button>
              <Button className="h-[22px] w-[126px] pl-[3px]" icon={<BoxIcon />}>Registrar Producto</Button>
              <Button className="h-[22px] w-[111px] pl-[3px]" icon={<GridIcon arrow="gray" />} disabled>Eliminar Detalle</Button>
              <Button className="h-[22px] w-[116px] pl-[3px]" icon={<GridIcon arrow="green" />}>
                <span className="pl-3">Agregar Detalle</span>
              </Button>
            </div>
          </fieldset>
        </div>
        <div className="flex h-[39px] shrink-0 items-center pl-[19px] pr-2">
          <div className="flex gap-1">
            <Button className="h-[30px] w-[59px] pl-[3px]" icon={<DoorIcon />}>
              <span className="pl-0.5">Salir</span>
            </Button>
            <Button className="h-[30px] w-[71px] pl-[3px]" icon={<PrinterIcon />} disabled>Imprimir</Button>
            <Button className="h-[30px] w-[79px] pl-1" icon={<DiskIcon />}>
              <span className="pl-2.5">Guardar</span>
            </Button>
          </div>
          <div className="ml-auto flex items-center">
            <Label id="dscto" w="w-[60px]">Dscto:</Label>
            <Text id="dscto" w="w-[82px]" tone="blue" />
            <Label id="sub" w="w-[68px]">Sub Total:</Label>
            <Text id="sub" w="w-[82px]" tone="blue" />
            <Label id="igv" w="w-[44px]">IGV:</Label>
            <Text id="igv" w="w-[82px]" tone="blue" />
            <Label id="total" w="w-[50px]">Total:</Label>
            <Text id="total" w="w-[82px]" tone="blue" />
          </div>
        </div>
      </div>
    </section>
  );
}

export default function App() {
  return (
    <div className="relative flex h-screen flex-col overflow-hidden bg-white font-['Liberation_Sans',Arial,sans-serif] text-[11px] leading-[14px] text-black">
      <Header />
      <Workspace />
      <StatusBar />
      <OrderDialog />
    </div>
  );
}
